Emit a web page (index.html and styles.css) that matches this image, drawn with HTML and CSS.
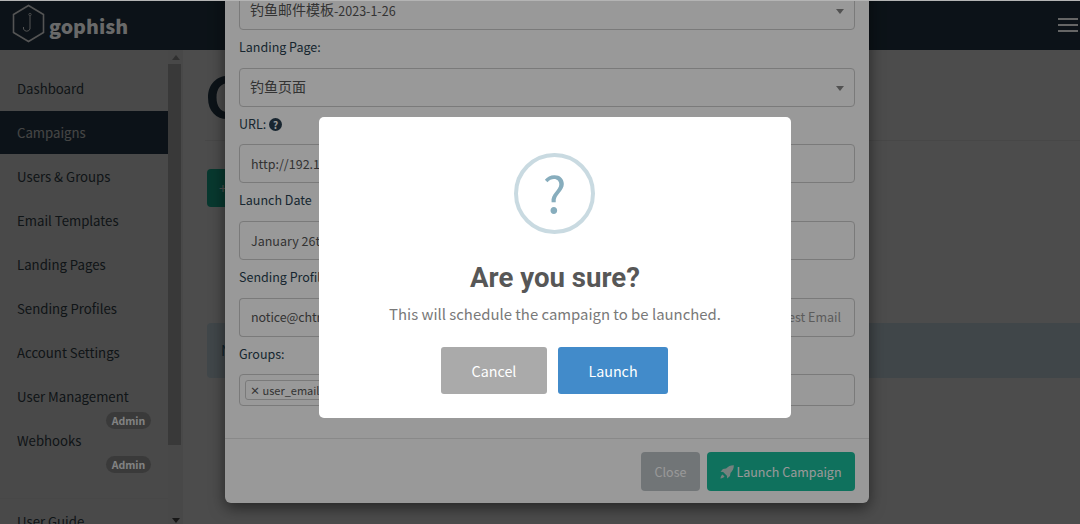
FILE: index.html
```html
<!DOCTYPE html>
<html>
<head>
<meta charset="utf-8">
<title>Campaigns - Gophish</title>
<link rel="stylesheet" href="styles.css">
</head>
<body>
<div class="page">
  <div class="top-edge"></div>
  <header class="navbar">
    <a class="brand">
      <svg class="logo" width="33" height="39" viewBox="0 0 33 39">
        <path d="M16.500 1.500 L31.500 10.500 V28.500 L16.500 37.500 L1.500 28.500 V10.500 Z" fill="none" stroke="#8c8c8c" stroke-width="1.600"/>
        <circle cx="18" cy="10.500" r="1.200" fill="none" stroke="#8c8c8c" stroke-width=".8"/>
        <path d="M18 12 V25 A3.500 3.500 0 0 1 11.500 25 V23" fill="none" stroke="#8c8c8c" stroke-width="1"/>
      </svg>
      <span class="brand-name">gophish</span>
    </a>
    <div class="burger"><i></i><i></i><i></i></div>
  </header>

  <div class="layout">
    <aside class="sidebar">
      <ul class="side-nav">
        <li>Dashboard</li>
        <li class="active">Campaigns</li>
        <li>Users &amp; Groups</li>
        <li>Email Templates</li>
        <li>Landing Pages</li>
        <li>Sending Profiles</li>
        <li>Account Settings</li>
        <li>User Management<span class="badge">Admin</span></li>
        <li>Webhooks<span class="badge">Admin</span></li>
        <li class="side-sep"></li>
        <li>User Guide</li>
      </ul>
      <div class="scrollbar">
        <span class="arrow-up"></span>
        <div class="thumb"></div>
        <span class="arrow-down"></span>
      </div>
    </aside>
    <main class="content">
      <h1 class="page-title">Campaigns</h1>
      <button class="btn-new">+ New Campaign</button>
      <div class="alert">No campaigns created yet.</div>
    </main>
  </div>

  <div class="backdrop"></div>

  <div class="modal">
    <div class="modal-body">
      <div class="select"><span class="cjk">钓鱼邮件模板</span>-2023-1-26</div>
      <label>Landing Page:</label>
      <div class="select"><span class="cjk">钓鱼页面</span></div>
      <label>URL: <span class="help">?</span></label>
      <div class="input">http://192.168.1.1</div>
      <label>Launch Date</label>
      <div class="input">January 26th 2023</div>
      <label>Sending Profile:</label>
      <div class="input-group">
        <div class="input">notice@chtr</div>
        <div class="input-addon">Send Test Email</div>
      </div>
      <label>Groups:</label>
      <div class="input tags"><span class="tag"><b>×</b> user_email</span></div>
    </div>
    <div class="modal-footer">
      <button class="btn-close">Close</button>
      <button class="btn-launch">
        <svg width="14" height="14" viewBox="0 0 16 16"><path d="M15.800.2C12.400.1 9.200 1.500 7 4L3.400 4.600.6 7.800l3 .3 4.300 4.300.3 3 3.200-2.800.6-3.600C14.500 6.800 15.900 3.600 15.800.2zM2.800 10.800C1.500 11.600.8 13.400.5 15.500c2.100-.3 3.900-1 4.700-2.300z" fill="#c4d8d2"/></svg>
        Launch Campaign
      </button>
    </div>
  </div>

  <div class="swal-overlay"></div>

  <div class="swal">
    <div class="swal-icon">?</div>
    <h2 class="swal-title">Are you sure?</h2>
    <p class="swal-text">This will schedule the campaign to be launched.</p>
    <div class="swal-actions">
      <button class="swal-cancel">Cancel</button>
      <button class="swal-confirm">Launch</button>
    </div>
  </div>
</div>
</body>
</html>
```

FILE: styles.css
```css
* { box-sizing: border-box; }

html, body {
  margin: 0;
  height: 100%;
  overflow: hidden;
  font-family: "Noto Sans CJK SC", "Noto Sans", sans-serif;
  font-size: 14px;
  color: #283f50;
  background: #fff;
}

button { font-family: inherit; border: 0; cursor: pointer; }

.page { position: relative; width: 1080px; height: 524px; overflow: hidden; }

.top-edge {
  position: absolute;
  left: 0; right: 0; top: 0;
  height: 1px;
  background: #b4b4b4;
  z-index: 20;
}

/* top bar */
.navbar {
  height: 50px;
  background: #283f50;
  display: flex;
  align-items: center;
  justify-content: space-between;
  padding: 0 2px 0 12px;
}
.brand { display: flex; align-items: center; gap: 4px; position: relative; z-index: 3; }
.logo { display: block; margin-top: -4px; }
.brand-name { font-size: 19.600px; font-weight: 900; color: #b0b0b0; }
.burger { display: flex; flex-direction: column; gap: 4px; width: 20px; position: relative; z-index: 3; }
.burger i { display: block; height: 2px; background: #a8a8a8; }

/* sidebar */
.layout { display: flex; height: 474px; }
.sidebar { width: 183px; flex: none; display: flex; background: #f5f5f5; overflow: hidden; }
.side-nav {
  list-style: none;
  margin: 0;
  padding: 16px 0 0;
  width: 168px;
  flex: none;
}
.side-nav li {
  position: relative;
  height: 44px;
  line-height: 46px;
  padding-left: 17px;
  font-size: 13.200px;
  color: #37474f;
}
.side-nav li.active {
  background: #283f50;
  background-clip: padding-box;
  border-top: 1px solid transparent;
  line-height: 44px;
  color: #e8e8e8;
}
.side-nav li.side-sep { height: 37px; border-bottom: 1px solid #eee; }
.badge {
  position: absolute;
  left: 106px;
  top: 38px;
  width: 45px;
  height: 17px;
  border-radius: 9px;
  background: #626262;
  color: #d9d9d9;
  font-size: 10.500px;
  font-weight: 700;
  line-height: 17px;
  text-align: center;
  z-index: 3;
}

.scrollbar { width: 15px; flex: none; background: #f1f1f1; display: flex; flex-direction: column; align-items: center; }
.arrow-up { border: 4px solid transparent; border-top: 0; border-bottom: 5px solid #a3a3a3; margin: 5px 0 4px; }
.thumb { width: 13px; height: 381px; background: #c1c1c1; margin-left: -3px; }
.arrow-down { border: 4px solid transparent; border-bottom: 0; border-top: 5px solid #505050; margin-top: auto; margin-bottom: 1px; }

/* main column behind the modal */
.content { flex: 1; padding: 0 0 0 24px; }
.page-title {
  margin: 0 0 0 -2px;
  height: 91px;
  padding-top: 11px;
  font-size: 56px;
  line-height: 66px;
  font-weight: 700;
  color: #283f50;
  border-bottom: 1px solid #eee;
}
.btn-new {
  display: block;
  margin-top: 28px;
  height: 38px;
  padding: 0 12px;
  background: #1abc9c;
  color: #fff;
  border-radius: 4px;
  font-size: 14px;
}
.alert {
  margin-top: 116px;
  height: 55px;
  line-height: 55px;
  padding-left: 14px;
  background: #d9edf7;
  border-radius: 4px 0 0 4px;
  color: #31708f;
}

.backdrop { position: absolute; inset: 0; background: rgba(0, 0, 0, .5); z-index: 2; }

/* campaign modal */
.modal {
  position: absolute;
  left: 225px;
  top: -24px;
  width: 644px;
  height: 527px;
  background: #fff;
  border-radius: 6px;
  box-shadow: 0 5px 15px rgba(0, 0, 0, .5);
  display: flex;
  flex-direction: column;
  z-index: 4;
}
.modal-body { flex: 1; padding: 15px 14px 0; display: flex; flex-direction: column; }
.modal-body label {
  height: 37.650px;
  line-height: 33px;
  font-size: 12.500px;
  color: #283f50;
  flex: none;
}
.select, .input {
  height: 39px;
  line-height: 37px;
  padding: 0 11px;
  border: 1px solid #ccc;
  border-radius: 4px;
  font-size: 12.500px;
  color: #555;
  background: #fff;
  flex: none;
  position: relative;
  white-space: nowrap;
  overflow: hidden;
}
.select { line-height: 34px; padding-left: 10px; }
.cjk { font-size: 14px; vertical-align: 1px; }
.select::after {
  content: "";
  position: absolute;
  right: 10px;
  top: 17px;
  border: 4px solid transparent;
  border-bottom: 0;
  border-top: 5px solid #888;
}
.help {
  display: inline-block;
  width: 13px;
  height: 13px;
  border-radius: 50%;
  background: #283f50;
  color: #fff;
  font-size: 10px;
  font-weight: 700;
  line-height: 13px;
  text-align: center;
  vertical-align: 0;
}
.input-group { display: flex; height: 39px; flex: none; }
.input-group .input { flex: 1; border-radius: 4px 0 0 4px; border-right: 0; letter-spacing: -.1px; line-height: 36px; }
.input-addon {
  width: 112px;
  flex: none;
  border: 1px solid #ccc;
  border-radius: 0 4px 4px 0;
  line-height: 36px;
  text-align: right;
  padding-right: 13px;
  font-size: 12.500px;
  color: #999;
  background: #fff;
  white-space: nowrap;
}
.input.tags { height: 32px; line-height: 29px; padding: 0 5px; }
.tag {
  display: inline-block;
  height: 20px;
  line-height: 18px;
  padding: 0 4px;
  border: 1px solid #ccc;
  border-radius: 3px;
  font-size: 11px;
  color: #555;
}
.tag b { font-size: 10px; font-weight: 700; }

.modal-footer {
  height: 65px;
  border-top: 1px solid #e5e5e5;
  display: flex;
  justify-content: flex-end;
  gap: 7px;
  padding: 13px 14px 0;
  flex: none;
}
.btn-close, .btn-launch {
  height: 39px;
  border-radius: 4px;
  font-size: 12.500px;
  color: #fff;
}
.btn-close { width: 59px; background: #bdc3c7; }
.btn-launch {
  width: 148px;
  background: #1abc9c;
  display: flex;
  align-items: center;
  justify-content: center;
  gap: 2px;
}

.swal-overlay { position: absolute; inset: 0; background: rgba(0, 0, 0, .4); z-index: 5; }

/* confirm dialog */
.swal {
  position: absolute;
  left: 319px;
  top: 117px;
  width: 472px;
  height: 301px;
  background: #fff;
  border-radius: 5px;
  display: flex;
  flex-direction: column;
  align-items: center;
  padding-top: 36px;
  z-index: 6;
}
.swal-icon {
  width: 81px;
  height: 81px;
  margin-right: 1px;
  border: 4px solid #c9dae1;
  border-radius: 50%;
  color: #87adbd;
  font-size: 50px;
  line-height: 68px;
  text-align: center;
}
.swal-title {
  margin: 24px 0 0;
  font-family: Roboto, "Liberation Sans", sans-serif;
  font-size: 27.600px;
  font-weight: 700;
  line-height: 40px;
  color: #575757;
}
.swal-text { margin: 4px 0 0; font-size: 14.900px; line-height: 24px; color: #797979; }
.swal-actions { display: flex; gap: 11px; margin: 21px 1px 0 0; }
.swal-cancel, .swal-confirm { height: 47px; border-radius: 3px; font-size: 14.300px; color: #fff; }
.swal-cancel { width: 106px; background: #aaa; }
.swal-confirm { width: 110px; background: #428bca; }
```
